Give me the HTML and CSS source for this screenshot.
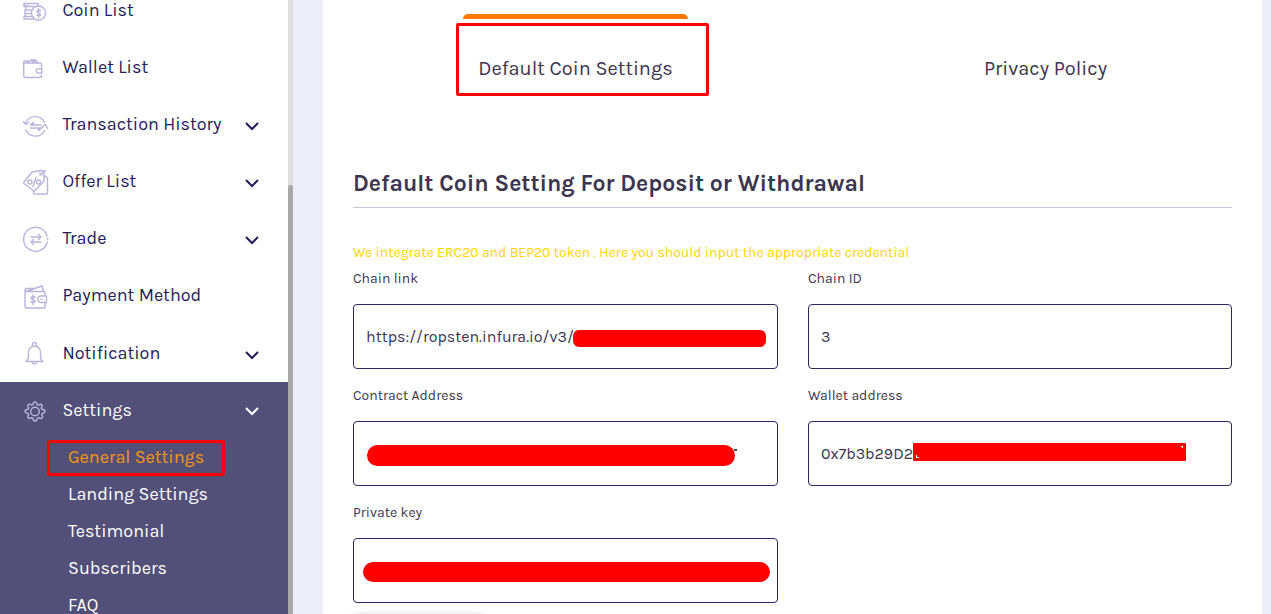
FILE: index.html
```html
<!DOCTYPE html>
<html lang="en">
<head>
<meta charset="utf-8">
<title>General Settings</title>
<link rel="stylesheet" href="styles.css">
</head>
<body>
<div class="app">
  <aside class="sidebar">
    <nav class="nav">
      <a class="item"><svg class="icon" viewBox="0 0 28 28"><path d="M2 5.500h14M2 5.500v2.500h4M2 8.500h10M4 8.500v3M3 12h6M3 12v3M3 15.500h6M3 15.500v3M2 18.500h8.500M2 18.500v2.500h10M16 5.500v2.500"/><circle cx="16.500" cy="15" r="7"/><path d="M18.500 12.800c-.5-1-3.700-1-3.700.7 0 1.600 3.800 1.200 3.800 3 0 1.700-3.300 1.700-4 .3M16.600 10.500v9"/></svg><span class="label">Coin List</span></a>
      <a class="item"><svg class="icon" viewBox="0 0 28 28"><path d="M19.500 12.500V9.500q0-1.500-1.500-1.500H3.500Q1.700 8 1.700 7v13.500q0 2 2 2h14q1.800 0 1.800-1.500v-1M19.800 13.700h-3.500a2 2 0 0 0 0 4.300h3.500zM1.700 7q0-1 2-1h2M5 8l4-3 2.500 2.500 2-2.500 3 3M9 5h4.500"/></svg><span class="label">Wallet List</span></a>
      <a class="item"><svg class="icon" viewBox="0 0 28 28"><path d="M4 10.500a10.200 10.200 0 0 1 18.500 0M1.500 9.500l2.300 3 3-2M4 18a10.200 10.200 0 0 0 18.500.500M19.500 16l4-3.500 2.200 4M8.500 13h10.500M8.500 13l3-2.500v2.500M19.500 16h-11M19.500 16l-3 2.500v-2.500"/></svg><span class="label">Transaction History</span><svg class="chev" viewBox="0 0 16 10"><path d="M2 2l6 6 6-6"/></svg></a>
      <a class="item"><svg class="icon up" viewBox="0 0 28 28"><path d="M2 14L10 4 19 2.500l3 1v9.500l-9 9.500q-1 1-2 0L2 15.500q-.8-.7 0-1.500zM23 8l2.500 2v15q0 1-1 1H12.500q-1 0-1-1v-2.500M18 7l5.500-4.500M17.500 5l2.500 2M14 9.500l-3 9"/><circle cx="8" cy="14" r="2"/><circle cx="16.500" cy="14" r="2"/></svg><span class="label">Offer List</span><svg class="chev" viewBox="0 0 16 10"><path d="M2 2l6 6 6-6"/></svg></a>
      <a class="item"><svg class="icon up" viewBox="0 0 28 28"><path d="M25 10.500A12 12 0 1 0 25.300 17M25.700 13v1.500M9 12h9.500M16.500 9.500l2.500 2.500-2.500 2.500M19 17h-9.500M11.500 14.500l-2.500 2.500 2.500 2.500"/></svg><span class="label">Trade</span><svg class="chev" viewBox="0 0 16 10"><path d="M2 2l6 6 6-6"/></svg></a>
      <a class="item"><svg class="icon" viewBox="0 0 28 28"><path d="M23 13V9.500q0-1-1-1H4.500a1.500 1.500 0 0 1 0-3H12M3 7v16.500q0 1.500 1.500 1.500H22q1 0 1-1v-4M4 8.500l16-5.500 1.500 5M24.500 13h-6a3.300 3.300 0 0 0 0 6.500h6zM19 16.300h1"/><path d="M13 14.500c-.5-1.500-4-1.300-4 .5 0 2 4 1.200 4 3.200 0 1.800-3.500 1.800-4 .3M11 12v9.500"/></svg><span class="label">Payment Method</span></a>
      <a class="item low"><svg class="icon bell" viewBox="0 0 28 28"><path d="M4 21.500q2.500-1.500 2.500-5v-4.500a6 6 0 0 1 12 0v4.500q0 3.500 2.500 5zM10.500 6.500V4.500a2 2 0 0 1 4 0v2M10 22a2.600 2.600 0 0 0 5 0"/></svg><span class="label">Notification</span><svg class="chev" viewBox="0 0 16 10"><path d="M2 2l6 6 6-6"/></svg></a>
      <a class="item open"><svg class="icon" viewBox="0 0 28 28"><path d="M10.900 6.700Q11.300 4 13 4t2.100 2.700l1.300.6q2-1.700 3.200-.5t-.4 3.100l.6 1.400Q23 11.600 23 13.300t-2.700 2.100l-.6 1.400q1.600 2 .4 3.200t-3.200-.4l-1.400.6Q15 23 13 23t-2.100-2.800l-1.400-.6q-2 1.600-3.200.4t.4-3.200l-.6-1.400Q3 15 3 13.300t3.100-2.100l.6-1.400q-1.600-2-.4-3.200t3.200.5z"/><circle cx="13" cy="13.500" r="4.300"/></svg><span class="label">Settings</span><svg class="chev" viewBox="0 0 16 10"><path d="M2 2l6 6 6-6"/></svg></a>
      <div class="submenu">
        <a class="sub current"><span>General Settings</span></a>
        <a class="sub"><span>Landing Settings</span></a>
        <a class="sub"><span>Testimonial</span></a>
        <a class="sub"><span>Subscribers</span></a>
        <a class="sub"><span>FAQ</span></a>
      </div>
    </nav>
    <div class="track"><div class="thumb"></div></div>
  </aside>
  <main class="panel">
    <div class="tabs">
      <div class="tab active"><span>Default Coin Settings</span></div>
      <div class="tab"><span>Privacy Policy</span></div>
    </div>
    <h2 class="title"><span>Default Coin Setting For Deposit or Withdrawal</span></h2>
    <p class="note"><span>We integrate ERC20 and BEP20 token . Here you should input the appropriate credential</span></p>
    <div class="form">
      <div class="field"><label>Chain link</label><div class="input"><span>https://ropsten.infura.io/v3/</span><i class="mask m1"></i></div></div>
      <div class="field"><label>Chain ID</label><div class="input"><span>3</span></div></div>
      <div class="field"><label>Contract Address</label><div class="input"><i class="mask m2"></i></div></div>
      <div class="field"><label>Wallet address</label><div class="input"><span>0x7b3b29D2</span><i class="mask m3"></i></div></div>
      <div class="field"><label>Private key</label><div class="input"><i class="mask m4"></i></div></div>
    </div>
    <div class="save"></div>
  </main>
</div>
</body>
</html>
```
FILE: styles.css
```css
*, *::before, *::after { box-sizing: border-box; }
body { margin: 0; background: #eeeef9; font-family: Karla, Roboto, sans-serif; color: #3c354e; }
.app { display: flex; height: 614px; overflow: hidden; }
.sidebar { display: flex; width: 293px; background: #fff; flex: none; }
.nav { width: 288px; margin-top: -18px; }
.item { display: flex; align-items: center; height: 57.15px; padding: 0 28px 2px 22px; font-size: 18px; color: #261c56; }
.low { padding-bottom: 1px; }
.icon { width: 28px; height: 28px; margin: 4px 12.4px 0 0; fill: none; stroke: #bab4dc; stroke-width: 1.4; stroke-linecap: round; stroke-linejoin: round; }
.up { margin-top: 2px; }
.bell { margin-top: 3px; }
.label { flex: 1; white-space: nowrap; }
.chev { width: 16px; height: 10px; margin-top: 4px; fill: none; stroke: #261c56; stroke-width: 2; }
.open { background: #524f79; color: #fff; }
.open .chev { stroke: #fff; margin-top: 2px; }
.submenu { height: 200px; background: #524f79; }
.sub { position: relative; display: flex; align-items: center; height: 37px; padding: 0 0 2px 68px; font-size: 18px; color: #fff; }
.current { color: #f8960c; }
.current::after { content: ""; position: absolute; left: 47px; top: 1px; width: 178px; height: 36px; border: 3px solid #f00; border-radius: 2px; }
.track { width: 5px; background: #dedede; padding-top: 185px; }
.thumb { height: 500px; background: #a9a9a9; border-radius: 3px 3px 0 0; }
.panel { width: 939px; height: 614px; margin-left: 30px; padding: 14px 30px 0; background: #fff; }
.tabs { display: grid; grid-template-columns: 470px 470px; justify-items: center; margin: 0 -48px 0 -13px; height: 110px; }
.tab { position: relative; width: 225px; height: 110px; padding-left: 1px; text-align: center; font-size: 20px; line-height: 110px; white-space: nowrap; }
.active { border-top: 5px solid #ff7800; border-radius: 5px 5px 0 0; line-height: 100px; }
.active::after { content: ""; position: absolute; left: -7px; top: 4px; width: 253px; height: 73px; border: 3px solid #f00; border-radius: 2px; }
.title { margin: 42px 0 0; height: 42px; border-bottom: 1px solid #c7c5d8; font-size: 23px; line-height: 36px; font-weight: 700; white-space: nowrap; }
.note { margin: 35px 0 0; height: 26px; font-size: 14px; line-height: 20px; color: #ffd400; white-space: nowrap; }
.form { display: grid; grid-template-columns: 425px 424px; column-gap: 30px; }
.field { height: 117px; }
.field label { display: block; height: 35px; line-height: 20px; font-size: 14px; }
.input { position: relative; height: 65px; padding-left: 12px; border: 1px solid #30265f; border-radius: 4px; font-size: 16px; line-height: 64px; }
.mask { position: absolute; background: #f00; }
.m1 { left: 219px; top: 25px; width: 193px; height: 17px; border-radius: 6px; }
.m2 { left: 13px; top: 23px; width: 368px; height: 21px; border-radius: 11px; }
.m2::after { content: ""; position: absolute; right: -2px; top: 4px; width: 3px; height: 2px; background: #4a4563; }
.m3 { left: 104px; top: 21px; width: 273px; height: 18px; border-radius: 1px; }
.m3::before { content: ""; position: absolute; left: 3px; bottom: 3px; width: 3px; height: 3px; border: solid #fff; border-width: 0 0 1px 1px; }
.m3::after { content: ""; position: absolute; right: 3px; top: 3px; width: 2px; height: 2px; border: solid #fff; border-width: 1px 1px 0 0; }
.m4 { left: 9px; top: 23px; width: 407px; height: 20px; border-radius: 10px; }
.save { width: 130px; height: 40px; margin-top: -5px; background: #fff; border-radius: 5px; box-shadow: 0 2px 8px rgba(0,0,0,.3); }
```
